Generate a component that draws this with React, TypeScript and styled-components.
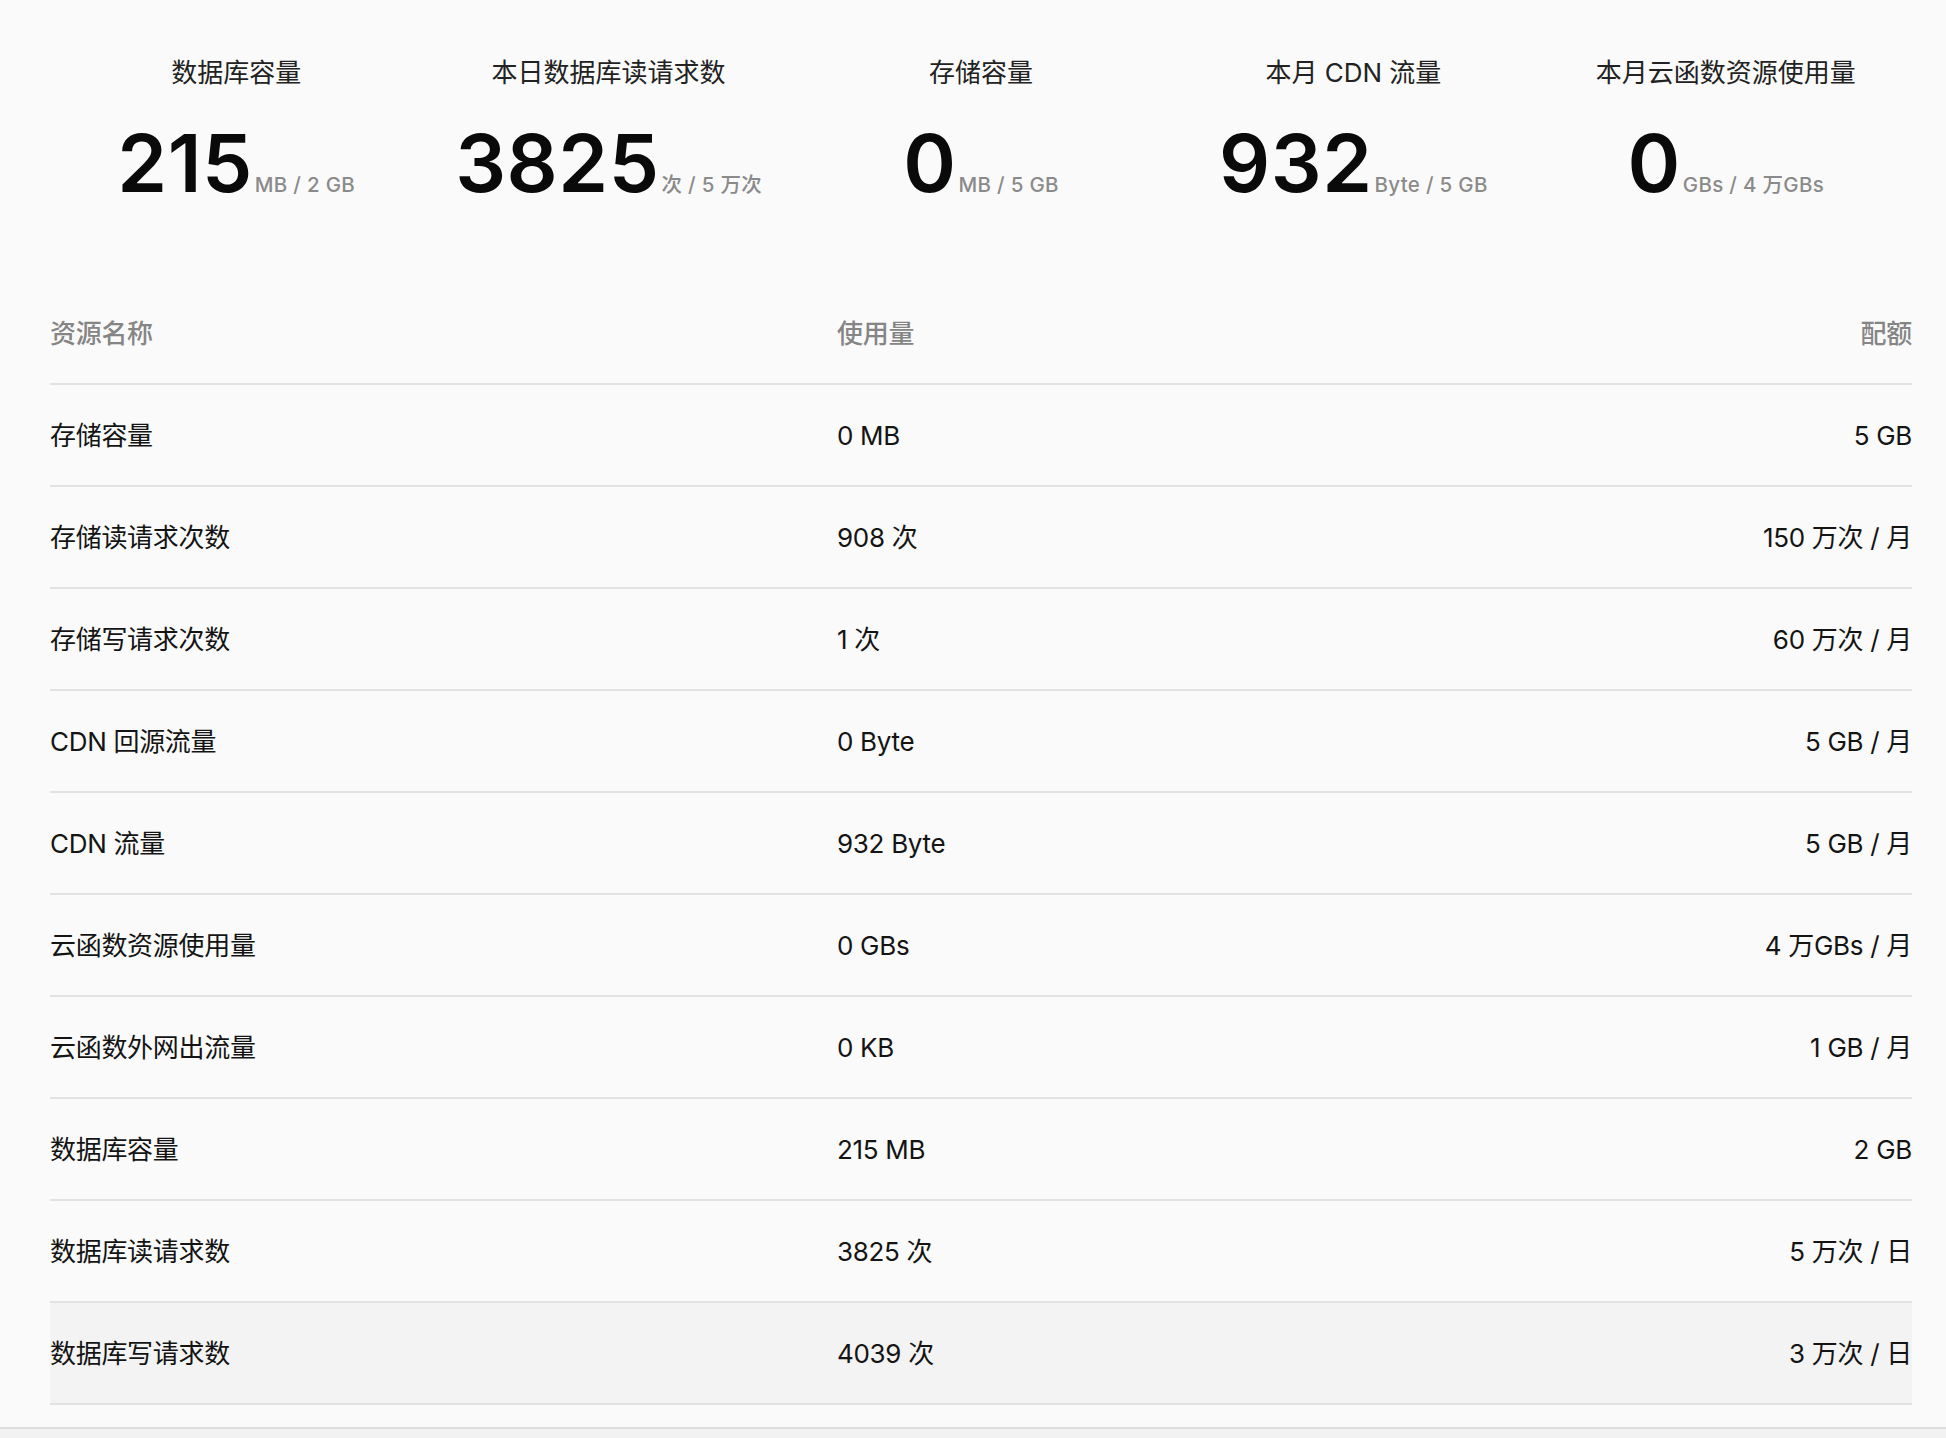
import styled, { createGlobalStyle } from "styled-components";

interface Stat {
   label: string;
   value: string;
   unit: string;
}

interface Resource {
   name: string;
   used: string;
   quota: string;
}

const stats: Stat[] = [
   { label: "数据库容量", value: "215", unit: "MB / 2 GB" },
   { label: "本日数据库读请求数", value: "3825", unit: "次 / 5 万次" },
   { label: "存储容量", value: "0", unit: "MB / 5 GB" },
   { label: "本月 CDN 流量", value: "932", unit: "Byte / 5 GB" },
   { label: "本月云函数资源使用量", value: "0", unit: "GBs / 4 万GBs" },
];

const resources: Resource[] = [
   { name: "存储容量", used: "0 MB", quota: "5 GB" },
   { name: "存储读请求次数", used: "908 次", quota: "150 万次 / 月" },
   { name: "存储写请求次数", used: "1 次", quota: "60 万次 / 月" },
   { name: "CDN 回源流量", used: "0 Byte", quota: "5 GB / 月" },
   { name: "CDN 流量", used: "932 Byte", quota: "5 GB / 月" },
   { name: "云函数资源使用量", used: "0 GBs", quota: "4 万GBs / 月" },
   { name: "云函数外网出流量", used: "0 KB", quota: "1 GB / 月" },
   { name: "数据库容量", used: "215 MB", quota: "2 GB" },
   { name: "数据库读请求数", used: "3825 次", quota: "5 万次 / 日" },
   { name: "数据库写请求数", used: "4039 次", quota: "3 万次 / 日" },
];

const GlobalStyle = createGlobalStyle`
   * { box-sizing: border-box; }
   body {
      margin: 0;
      background: #fafafa;
      font-family: "Inter", "Noto Sans CJK SC", sans-serif;
      color: #141414;
   }
`;

// Página inteira: conteúdo + rodapé cinza no fim
const Page = styled.div`
   min-height: 100vh;
   display: flex;
   flex-direction: column;
   background: #fafafa;
`;

const Content = styled.main`
   padding: 0 34px 0 50px;
`;

// Linha de estatísticas: 5 colunas iguais
const StatGrid = styled.section`
   display: grid;
   grid-template-columns: repeat(5, 1fr);
   height: 283px;
   padding-top: 55px;
`;

const StatItem = styled.div`
   display: flex;
   flex-direction: column;
   align-items: center;
`;

const StatLabel = styled.div`
   font-size: 26px;
   line-height: 36px;
   color: #222;
`;

const StatValueRow = styled.div`
   display: flex;
   align-items: baseline;
   margin-top: 32px;
`;

const StatNumber = styled.strong`
   font-size: 80px;
   line-height: 80px;
   font-weight: 600;
   letter-spacing: 0.5px;
   color: #0a0a0a;
`;

const StatUnit = styled.span`
   font-size: 20.5px;
   font-weight: 500;
   letter-spacing: 0.3px;
   color: #8a8a8a;
   margin-left: 2px;
`;

// Tabela de recursos
const Table = styled.section`
   display: flex;
   flex-direction: column;
`;

const Row = styled.div<{ $highlighted?: boolean }>`
   display: grid;
   grid-template-columns: 787px 1fr auto;
   align-items: center;
   height: 102px;
   border-bottom: 2px solid #e2e2e2;
   background: ${({ $highlighted }) => ($highlighted ? "#f3f3f3" : "transparent")};
`;

const Cell = styled.div<{ $head?: boolean; $right?: boolean }>`
   font-size: 26px;
   line-height: 36px;
   letter-spacing: -0.3px;
   color: ${({ $head }) => ($head ? "#858585" : "#141414")};
   font-weight: ${({ $head }) => ($head ? 500 : 400)};
   text-align: ${({ $right }) => ($right ? "right" : "left")};
   padding-top: 2px;
`;

const Footer = styled.footer`
   flex: 1;
   min-height: 10px;
   margin-top: 22px;
   border-top: 2px solid #dcdcdc;
   background: #f2f2f2;
`;

export default function App() {
   return (
      <>
         <GlobalStyle />
         <Page>
            <Content>
               <StatGrid>
                  {stats.map((s) => (
                     <StatItem key={s.label}>
                        <StatLabel>{s.label}</StatLabel>
                        <StatValueRow>
                           <StatNumber>{s.value}</StatNumber>
                           <StatUnit>{s.unit}</StatUnit>
                        </StatValueRow>
                     </StatItem>
                  ))}
               </StatGrid>

               <Table>
                  <Row>
                     <Cell $head>资源名称</Cell>
                     <Cell $head>使用量</Cell>
                     <Cell $head $right>配额</Cell>
                  </Row>
                  {resources.map((r, i) => (
                     <Row key={r.name} $highlighted={i === resources.length - 1}>
                        <Cell>{r.name}</Cell>
                        <Cell>{r.used}</Cell>
                        <Cell $right>{r.quota}</Cell>
                     </Row>
                  ))}
               </Table>
            </Content>
            <Footer />
         </Page>
      </>
   );
}
